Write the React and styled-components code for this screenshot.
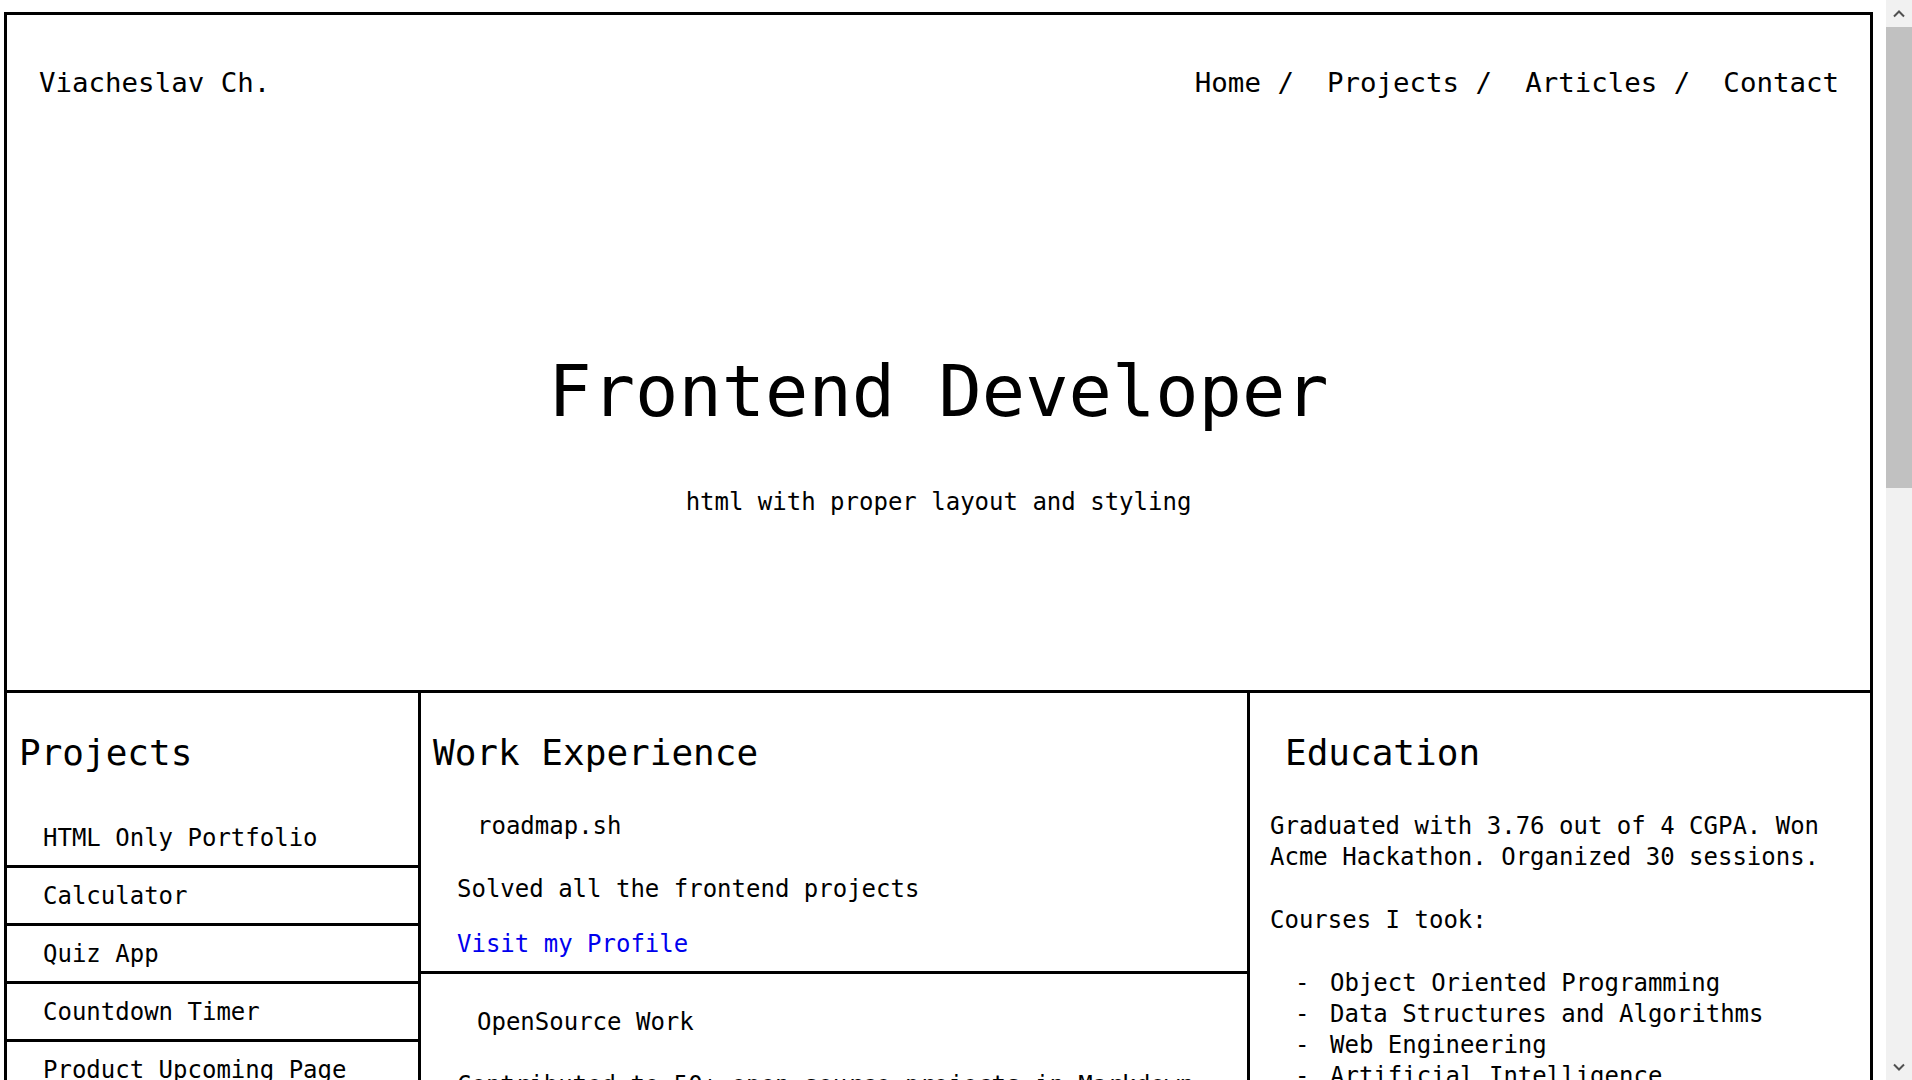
import styled, { createGlobalStyle } from "styled-components";

const GlobalStyle = createGlobalStyle`
  body {
    margin: 0;
    background: #fff;
    color: #000;
    font-family: "DejaVu Sans Mono", "Liberation Mono", monospace;
  }
`;

const Page = styled.div`
  width: 1869px;
  margin: 12px 0 0 4px;
  border: 3px solid #000;
  box-sizing: border-box;
`;

const Header = styled.header`
  height: 134px;
  display: flex;
  justify-content: space-between;
  align-items: center;
  padding: 0 31px 0 32px;
  font-size: 27.45px;
`;

const Brand = styled.div``;

const Nav = styled.nav`
  display: flex;
  gap: 33px;
`;

const NavLink = styled.a`
  color: #000;
  text-decoration: none;
  white-space: pre;
`;

const Hero = styled.section`
  box-sizing: border-box;
  height: 544px;
  padding-top: 198px;
  border-bottom: 3px solid #000;
  text-align: center;
`;

const Title = styled.h1`
  margin: 0;
  font-size: 72px;
  line-height: 88px;
  font-weight: normal;
`;

const Subtitle = styled.p`
  margin: 52px 0 0;
  font-size: 24px;
  line-height: 31px;
`;

const Columns = styled.div`
  display: grid;
  grid-template-columns: 414px 829px 1fr;
  font-size: 24px;
  line-height: 31px;
`;

const Column = styled.section`
  padding-top: 38px;
  border-right: ${(p) => (p.$last ? "none" : "3px solid #000")};
`;

const SectionTitle = styled.h2`
  margin: 0 0 37px;
  padding-left: ${(p) => p.$indent || 12}px;
  font-size: 36px;
  line-height: 43px;
  font-weight: normal;
`;

const ProjectList = styled.ul`
  list-style: none;
  margin: -1px 0 0;
  padding: 0;
`;

const ProjectItem = styled.li`
  height: 55px;
  display: flex;
  align-items: center;
  padding: 1px 0 0 36px;
  box-sizing: border-box;
  border-bottom: 3px solid #000;
  height: 58px;
`;

const WorkItem = styled.article`
  padding: 0 0 11px 36px;
  border-bottom: 3px solid #000;

  & + & {
    padding-top: 33px;
  }
`;

const Role = styled.h3`
  margin: 0 0 0 20px;
  font-size: 24px;
  line-height: 31px;
  font-weight: normal;
`;

const Desc = styled.p`
  margin: 32px 0 0;
`;

const ProfileLink = styled.a`
  display: inline-block;
  margin-top: 24px;
  color: #0000ee;
  text-decoration: none;
`;

const EduBody = styled.div`
  padding: 0 20px;
`;

const Para = styled.p`
  margin: 0 0 32px;
`;

const CourseList = styled.ul`
  list-style: none;
  margin: 0;
  padding: 0 0 0 25px;
`;

const Course = styled.li`
  display: flex;
`;

const Dash = styled.span`
  width: 35px;
  flex: none;
`;

/* browser scrollbar as seen in the screenshot */
const ScrollTrack = styled.div`
  position: fixed;
  top: 0;
  right: 0;
  width: 26px;
  height: 100vh;
  background: #f1f1f1;
  display: flex;
  flex-direction: column;
`;

const ScrollArrow = styled.div`
  height: 27px;
  display: flex;
  align-items: center;
  justify-content: center;
  flex: none;
`;

const ScrollThumb = styled.div`
  height: 461px;
  background: #c1c1c1;
`;

const ScrollFill = styled.div`
  flex: 1;
`;

const Chevron = ({ down }) => (
  <svg width="12" height="8" viewBox="0 0 12 8">
    <polyline
      points={down ? "1,1.5 6,6.5 11,1.5" : "1,6.5 6,1.5 11,6.5"}
      fill="none"
      stroke="#505050"
      strokeWidth="2"
    />
  </svg>
);

const projects = [
  "HTML Only Portfolio",
  "Calculator",
  "Quiz App",
  "Countdown Timer",
  "Product Upcoming Page",
  "Tooltip UI",
  "Todo List",
];

const courses = [
  "Object Oriented Programming",
  "Data Structures and Algorithms",
  "Web Engineering",
  "Artificial Intelligence",
  "Operating Systems",
];

const App = () => {
  return (
    <>
      <GlobalStyle />
      <Page>
        <Header>
          <Brand>Viacheslav Ch.</Brand>
          <Nav>
            <NavLink href="#">Home /</NavLink>
            <NavLink href="#">Projects /</NavLink>
            <NavLink href="#">Articles /</NavLink>
            <NavLink href="#">Contact</NavLink>
          </Nav>
        </Header>
        <Hero>
          <Title>Frontend Developer</Title>
          <Subtitle>html with proper layout and styling</Subtitle>
        </Hero>
        <Columns>
          <Column>
            <SectionTitle>Projects</SectionTitle>
            <ProjectList>
              {projects.map((p) => (
                <ProjectItem key={p}>{p}</ProjectItem>
              ))}
            </ProjectList>
          </Column>
          <Column>
            <SectionTitle>Work Experience</SectionTitle>
            <WorkItem>
              <Role>roadmap.sh</Role>
              <Desc>Solved all the frontend projects</Desc>
              <ProfileLink href="#">Visit my Profile</ProfileLink>
            </WorkItem>
            <WorkItem>
              <Role>OpenSource Work</Role>
              <Desc>Contributed to 50+ open source projects in Markdown</Desc>
              <ProfileLink href="#">Visit my GitHub</ProfileLink>
            </WorkItem>
          </Column>
          <Column $last>
            <SectionTitle $indent={35}>Education</SectionTitle>
            <EduBody>
              <Para>
                Graduated with 3.76 out of 4 CGPA. Won Acme Hackathon. Organized 30
                sessions.
              </Para>
              <Para>Courses I took:</Para>
              <CourseList>
                {courses.map((c) => (
                  <Course key={c}>
                    <Dash>-</Dash>
                    {c}
                  </Course>
                ))}
              </CourseList>
            </EduBody>
          </Column>
        </Columns>
      </Page>
      <ScrollTrack>
        <ScrollArrow>
          <Chevron />
        </ScrollArrow>
        <ScrollThumb />
        <ScrollFill />
        <ScrollArrow>
          <Chevron down />
        </ScrollArrow>
      </ScrollTrack>
    </>
  );
};

export default App;
